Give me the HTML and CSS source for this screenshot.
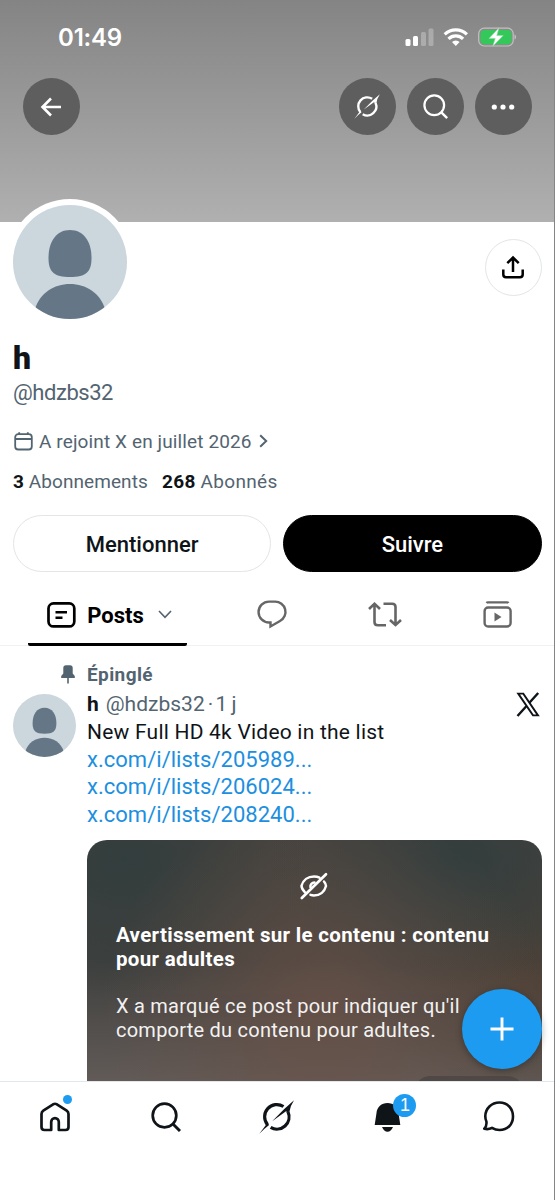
FILE: index.html
```html
<!DOCTYPE html>
<html lang="fr">
<head>
<meta charset="utf-8">
<title>h (@hdzbs32) / X</title>
<link rel="stylesheet" href="styles.css">
</head>
<body>
<svg class="defs" width="0" height="0">
  <defs>
    <clipPath id="disc"><circle cx="57" cy="57" r="57"/></clipPath>
    <symbol id="avatar" viewBox="0 0 114 114">
      <g clip-path="url(#disc)">
        <rect width="114" height="114" fill="#cbd6dd"/>
        <path d="M57 25C71 25 78.500 37 78.500 53C78.500 67 73 72 57 72C41 72 35.500 67 35.500 53C35.500 37 43 25 57 25Z" fill="#657786"/>
        <path d="M22 104C27 88 41 79 57 79C73 79 87 88 92 104V114H22Z" fill="#657786"/>
      </g>
    </symbol>
    <symbol id="search" viewBox="0 0 30 30">
      <circle cx="13.500" cy="13.500" r="11.800" fill="none" stroke="currentColor" stroke-width="2.700"/>
      <path d="M21.700 21.700L29 29" stroke="currentColor" stroke-width="2.900"/>
    </symbol>
    <symbol id="grok" viewBox="0 0 34 33">
      <path d="M8.200 23.900A11.900 11.900 0 0 1 23.800 6.300M28.200 11.500A11.900 11.900 0 0 1 11.300 26.600" fill="none" stroke="currentColor" stroke-width="3.100"/>
      <path d="M.3 32.800Q4 28 6.500 24.500L8.500 22.400L9.800 24.200Q6 27 .3 32.800Z" fill="currentColor"/>
      <path d="M34 .2L24.500 8.700L12.800 20.600L26.600 10.600L26.700 12.300L29.600 11.200Q30.200 6 34 .2Z" fill="currentColor"/>
    </symbol>
  </defs>
</svg>
<div class="screen">
  <header class="banner">
    <div class="status">
      <span class="clock">01:49</span>
      <svg class="status-icons" width="112" height="22" viewBox="0 0 112 22">
        <rect x="0.500" y="13" width="5" height="7" rx="1.500" fill="#fff"/>
        <rect x="8" y="10" width="5" height="10" rx="1.500" fill="#fff"/>
        <rect x="16" y="6" width="5" height="14" rx="1.500" fill="#fff" opacity=".28"/>
        <rect x="23.500" y="2.500" width="5" height="17.500" rx="1.500" fill="#fff" opacity=".28"/>
        <g fill="none" stroke="#fff" stroke-width="3.200">
          <path d="M39.700 8.300A16 16 0 0 1 61.900 8.300"/>
          <path d="M43.500 12.900A10.500 10.500 0 0 1 58.100 12.900"/>
        </g>
        <path d="M47 16A5.500 5.500 0 0 1 54.600 16L50.800 20Z" fill="#fff"/>
        <rect x="73.700" y="2.200" width="34.500" height="17.800" rx="5.500" fill="none" stroke="#c1c1c1" stroke-width="1.200"/>
        <rect x="75.500" y="4" width="31" height="14.200" rx="4" fill="#34c759"/>
        <path d="M109.500 8.500C111.600 9 111.600 13 109.500 13.500Z" fill="#c1c1c1"/>
        <path d="M94 1.800L84 12.400H90.200L87.800 20.200L98.200 9.600H91.800Z" fill="#fff" stroke="#8fd9a2" stroke-width=".6"/>
      </svg>
    </div>
    <div class="toolbar">
      <button class="round back"><svg width="22" height="20" viewBox="0 0 22 20"><path d="M21 10H2.500M11 1.500L2.500 10L11 18.500" fill="none" stroke="#fff" stroke-width="2.600"/></svg></button>
      <button class="round"><svg width="26" height="25"><use href="#grok"/></svg></button>
      <button class="round"><svg width="25" height="25"><use href="#search"/></svg></button>
      <button class="round"><svg width="24" height="6" viewBox="0 0 24 6" fill="#fff"><circle cx="3.300" cy="3" r="2.600"/><circle cx="12" cy="3" r="2.600"/><circle cx="20.700" cy="3" r="2.600"/></svg></button>
    </div>
  </header>
  <main class="content">
    <section class="profile">
      <div class="identity">
        <svg class="portrait"><use href="#avatar"/></svg>
        <button class="share"><svg width="22" height="24" viewBox="0 0 22 24" fill="none" stroke="#000" stroke-width="2.500"><path d="M11 16V1.500M5.300 7.200L11 1.500L16.700 7.200M1.300 13.500V18.500Q1.300 21.200 4 21.200H18Q20.700 21.200 20.700 18.500V13.500"/></svg></button>
      </div>
      <h1 class="name">h</h1>
      <p class="handle">@hdzbs32</p>
      <p class="joined">
        <svg width="19" height="19" viewBox="0 0 19 19" fill="none" stroke="#536471" stroke-width="1.800"><rect x="1.200" y="2.200" width="16.600" height="15.300" rx="3"/><path d="M1.200 7H17.800M5.200 .2V2.500M13.800 .2V2.500"/></svg>
        <span class="joined-text">A rejoint X en juillet 2026</span>
        <svg width="9" height="14" viewBox="0 0 9 14" fill="none" stroke="#536471" stroke-width="2"><path d="M1.200 1.200L7.200 7L1.200 12.800"/></svg>
      </p>
      <p class="stats"><span class="stat following"><b>3</b> Abonnements</span><span class="stat followers"><b>268</b> Abonnés</span></p>
      <div class="actions">
        <button class="pill"><span class="mention">Mentionner</span></button>
        <button class="pill dark"><span class="follow">Suivre</span></button>
      </div>
    </section>
    <nav class="tabs">
      <a class="tab active">
        <svg width="29" height="26" viewBox="0 0 29 26" fill="none" stroke="#000" stroke-width="2.700"><rect x="1.500" y="1.400" width="25.800" height="23" rx="5"/><path d="M8.500 10.300H20M8.500 15.800H15.500" stroke-width="2.400"/></svg>
        <span class="tab-label">Posts</span>
        <svg width="14" height="9" viewBox="0 0 14 9" fill="none" stroke="#536471" stroke-width="1.600"><path d="M1 1L7 7.300L13 1"/></svg>
      </a>
      <a class="tab"><svg width="30" height="29" viewBox="0 0 30 29" fill="none" stroke="#666" stroke-width="2.400"><path d="M13.500 22.500H12A10.400 10.400 0 0 1 12 1.600H18A10.300 10.300 0 0 1 23 21L13.500 26.500Z"/></svg></a>
      <a class="tab"><svg width="34" height="25" viewBox="0 0 34 25" fill="none" stroke="#666" stroke-width="2.600"><path d="M1 7L6.500 1.800L12 7M6.500 2.500V20Q6.500 23.300 9.800 23.300H18M15.500 1.700H24.200Q27.500 1.700 27.500 5V22.500M22 18L27.500 23L33 18"/></svg></a>
      <a class="tab"><svg width="29" height="27" viewBox="0 0 29 27" fill="none" stroke="#666" stroke-width="2.400"><path d="M3.500 2Q4 1.400 5 1.400H24Q25 1.400 25.500 2"/><rect x="1.600" y="6.500" width="26" height="19" rx="3.500"/><path d="M11.500 11.500L18.500 16L11.500 20.500Z" fill="#666" stroke="none"/></svg></a>
    </nav>
    <article class="post">
      <div class="pinned">
        <svg width="14" height="19" viewBox="0 0 14 19" fill="#536471"><path d="M2.300 3Q2.300 .3 5 .3H9Q11.700 .3 11.700 3V8.500L13.800 11V13H.2V11L2.300 8.500Z"/><path d="M6.200 12H7.800V18.500H6.200Z"/></svg>
        <span class="pinned-label">Épinglé</span>
      </div>
      <div class="post-main">
        <svg class="mini-avatar"><use href="#avatar"/></svg>
        <div class="post-body">
          <div class="byline"><b>h</b><span class="meta">@hdzbs32</span><span class="age">·</span><span class="age">1 j</span>
            <svg class="x-logo" width="24" height="25" viewBox="0 0 24 25" fill="none" stroke="#0f1419" stroke-width="1.900"><path d="M2.200 1.600H7.300L22 23.400H17Z"/><path d="M22.200 1L13.400 10.700M10.300 14.200L1.500 24" stroke-width="2.400"/></svg>
          </div>
          <p class="line body-text">New Full HD 4k Video in the list</p>
          <a class="line link">x.com/i/lists/205989...</a>
          <a class="line link">x.com/i/lists/206024...</a>
          <a class="line link">x.com/i/lists/208240...</a>
          <div class="warning">
            <svg class="eye" width="28" height="27" viewBox="0 0 28 27" fill="none" stroke="#fff" stroke-width="2.500" stroke-linecap="round"><path d="M5 19.300Q1.500 16 1.500 12.800C3 7 8 3.400 14 3.400Q17 3.400 19.500 4.600M24 8.500Q26 10.800 26 13C24.500 19 19.700 22.400 14 22.400Q12 22.400 10.500 21.900"/><path d="M10.400 14A4 4 0 0 1 14.500 9.500"/><path d="M1.800 25L26 1.300" stroke-width="2.700"/></svg>
            <h2 class="warning-title">Avertissement sur le contenu : contenu<br>pour adultes</h2>
            <p class="warning-text">X a marqué ce post pour indiquer qu'il<br>comporte du contenu pour adultes.</p>
            <div class="show"></div>
          </div>
        </div>
      </div>
    </article>
  </main>
  <nav class="bottom">
    <a class="dest"><svg width="30" height="30" viewBox="0 0 30 30" fill="none" stroke="#0f1419" stroke-width="2.700" stroke-linejoin="round"><path d="M11.200 28V20A3.800 3.800 0 0 1 18.800 20V28H25.500Q28.500 28 28.500 25V12Q28.500 9.800 26.700 8.600L16.500 2.200Q15 1.300 13.500 2.200L3.300 8.600Q1.500 9.800 1.500 12V25Q1.500 28 4.500 28Z"/></svg><i class="dot"></i></a>
    <a class="dest"><svg width="30" height="30"><use href="#search"/></svg></a>
    <a class="dest"><svg width="35" height="34"><use href="#grok"/></svg></a>
    <a class="dest"><svg width="27" height="30" viewBox="0 0 27 30" fill="#0f1419"><path d="M13.500 1C19.500 1 24 5 24.500 11L26.300 23H.7L2.500 11C3 5 7.500 1 13.500 1Z"/><path d="M8 25H19Q17 29.700 13.500 29.700T8 25Z"/></svg><i class="badge">1</i></a>
    <a class="dest"><svg width="32" height="31" viewBox="0 0 32 31" fill="none" stroke="#0f1419" stroke-width="2.600" stroke-linejoin="round"><path d="M16.500 1.500C24.500 1.500 30 7.500 30 15.500C30 23.500 24.500 29 16.500 29Q12.500 29 9 26.800Q5.500 28.800 1.300 27.700Q4 25 3.400 20.500Q2.300 18 2.300 15.200C2.300 7.500 8.500 1.500 16.500 1.500Z"/></svg></a>
  </nav>
  <button class="compose"><svg width="24" height="24" viewBox="0 0 24 24" stroke="#fff" stroke-width="2.900"><path d="M12 .5V23.500M.5 12H23.500"/></svg></button>
</div>
</body>
</html>
```
FILE: styles.css
```css
* { box-sizing: border-box; }
body { margin: 0; background: #fff; color: #0f1419; font-family: Roboto, "Liberation Sans", sans-serif; }
h1, h2, p { margin: 0; }
svg { display: block; flex: none; overflow: visible; }
symbol { overflow: visible; }
button { font: inherit; padding: 0; border: 0; display: flex; align-items: center; justify-content: center; }
span { white-space: nowrap; }
.defs { position: absolute; }
.screen { position: relative; width: 555px; height: 1200px; overflow: hidden; display: flex; flex-direction: column; border-right: 1px solid #858585; }

.banner { flex: none; height: 222px; background: linear-gradient(#848484, #b0b0b0); }
.status { height: 78px; display: flex; justify-content: space-between; align-items: flex-start; padding: 24px 37px 0 58px; }
.clock { font: 600 24px/27px Inter, sans-serif; color: #fff; letter-spacing: -.2px; }
.status-icons { margin-top: 2px; }
.toolbar { display: flex; gap: 11px; padding: 0 22.500px 0 23px; color: #fff; }
.round { width: 57px; height: 57px; border-radius: 50%; background: #5e5e5e; color: #fff; }
.back { margin-right: auto; padding-right: 1px; }

.content { flex: 1; min-height: 0; display: flex; flex-direction: column; }
.profile { flex: none; padding: 0 12.500px 0 13px; height: 350px; }
.identity { display: flex; justify-content: space-between; height: 113px; }
.portrait { width: 114px; height: 114px; margin-top: -17px; border-radius: 50%; background: #fff; box-shadow: 0 0 0 6px #fff; }
.share { width: 57px; height: 57px; margin-top: 17px; border-radius: 50%; background: #fff; border: 1.5px solid #e3e5e6; }
.name { margin-top: 1px; font-size: 32px; line-height: 44px; font-weight: 900; }
.handle { font-size: 22px; line-height: 26px; color: #536471; letter-spacing: -.45px; }
.joined { display: flex; align-items: center; height: 24px; margin-top: 23px; padding-left: 1px; color: #536471; font-size: 19px; letter-spacing: .12px; }
.joined-text { width: 213px; margin: 0 7px 0 6px; }
.stats { display: flex; height: 24px; margin-top: 18px; font-size: 19px; line-height: 22px; color: #536471; letter-spacing: .08px; }
.stats b { color: #0f1419; }
.following { width: 149px; }
.followers { letter-spacing: .3px; }
.actions { display: flex; gap: 12px; margin-top: 20px; }
.pill { flex: 1; height: 57px; border-radius: 29px; border: 1.5px solid #e3e5e6; background: #fff; color: #0f1419; font-size: 22px; font-weight: 500; padding-top: 1px; }
.dark { background: #000; border-color: #000; color: #fff; }

.tabs { flex: none; height: 75px; margin-top: -1px; display: grid; grid-template-columns: 215px 114px 112px 113px; border-bottom: 1px solid #eff1f2; }
.tab { display: flex; align-items: center; justify-content: center; padding-top: 12px; }
.tab.active { margin: 0 28px; height: 75px; border-bottom: 3px solid #000; border-radius: 2px; padding: 15px 0 0 4px; }
.tab-label { font-weight: 700; font-size: 22px; line-height: 24px; color: #000; margin: 2px 14px 0 11px; }

.post { flex: 1; min-height: 0; padding: 0 12.500px 0 13px; }
.pinned { display: flex; align-items: center; height: 24px; margin-top: 16px; padding-left: 48px; gap: 12px; color: #536471; font-weight: 700; font-size: 19px; letter-spacing: .4px; }
.post-main { display: flex; gap: 11px; margin-top: 4px; }
.mini-avatar { width: 63px; height: 63px; margin-top: 4px; }
.post-body { flex: 1; min-width: 0; }
.byline { display: flex; align-items: center; height: 27px; font-size: 21px; color: #536471; }
.byline b { color: #0f1419; margin-right: 7px; }
.age { margin-left: 3px; letter-spacing: -.6px; }
.x-logo { margin: 2px 1.500px 0 auto; }
.line { display: block; height: 27.500px; line-height: 30px; font-size: 21px; white-space: nowrap; }
.body-text { letter-spacing: .22px; }
.link { color: #1d8fe0; font-size: 22px; line-height: 29px; letter-spacing: .02px; }
.warning { height: 243px; margin-top: 13px; padding: 33px 29px 0; border-radius: 20px 20px 0 0; overflow: hidden; color: #fff; display: flex; flex-direction: column;
  background: radial-gradient(ellipse 220px 210px at 52% 70%, rgba(106,82,71,.8), rgba(106,82,71,0)), radial-gradient(ellipse 190px 140px at 8% 8%, rgba(48,61,61,.9), rgba(48,61,61,0)), radial-gradient(ellipse 180px 130px at 80% 8%, rgba(48,61,61,.9), rgba(48,61,61,0)), radial-gradient(ellipse 140px 130px at 96% 60%, rgba(85,66,52,.7), rgba(85,66,52,0)), linear-gradient(#46423e, #3f403e 50%, #625b58); }
.eye { align-self: center; }
.warning-title { margin-top: 23px; font-size: 20.500px; line-height: 24px; font-weight: 700; letter-spacing: .32px; white-space: nowrap; }
.warning-text { margin-top: 23px; font-size: 20px; line-height: 24px; opacity: .93; letter-spacing: .24px; white-space: nowrap; }
.show { flex: none; align-self: flex-end; width: 112px; height: 36px; margin: 34px -12px 0 0; border-radius: 18px; background: #4f4845; }

.bottom { position: relative; flex: none; height: 119px; background: #fff; border-top: 1px solid #e1e8ed; display: grid; grid-template-columns: repeat(5, 1fr); align-items: start; }
.dest { position: relative; height: 69px; display: flex; align-items: center; justify-content: center; color: #0f1419; }
.dot { position: absolute; left: 62.500px; top: 13px; width: 9px; height: 9px; border-radius: 50%; background: #1d9bf0; }
.badge { position: absolute; left: 61px; top: 12px; width: 23px; height: 23px; border-radius: 50%; background: #1d9bf0; color: #fff; font: 400 18px/23px "Liberation Sans", sans-serif; text-align: center; }
.compose { position: absolute; left: 462px; top: 989px; width: 80px; height: 80px; border-radius: 50%; background: #1d9bf0; box-shadow: 0 2px 7px rgba(0,0,0,.3); }
```
